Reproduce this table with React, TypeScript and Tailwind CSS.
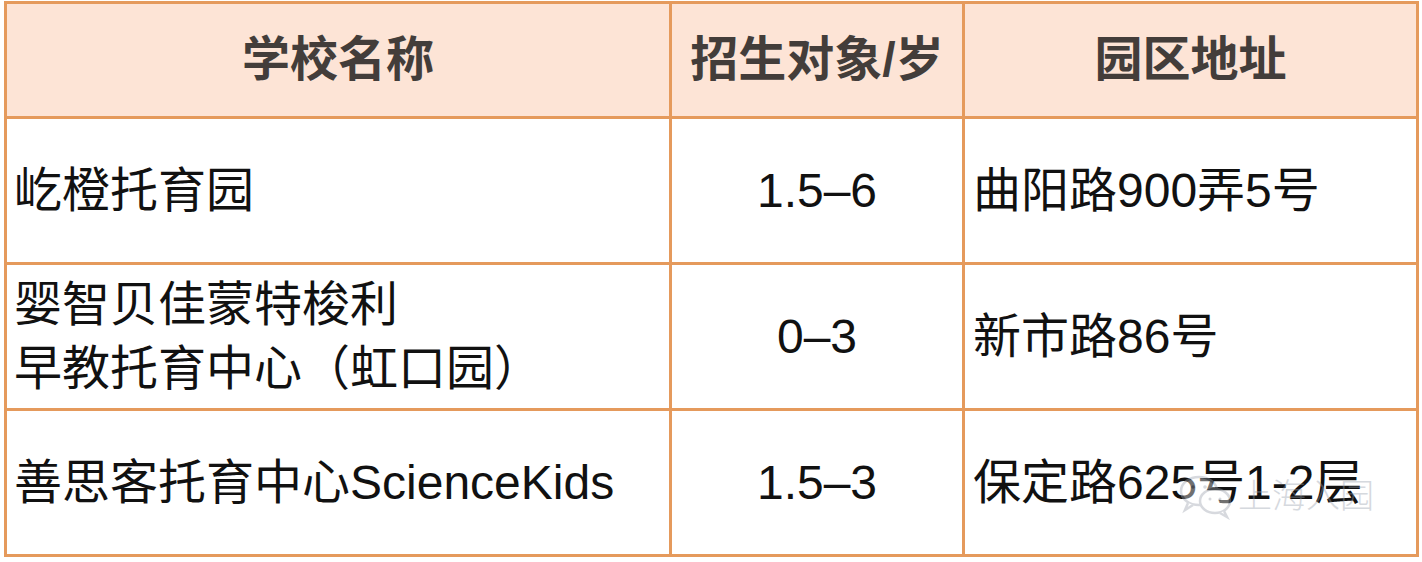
const rows = [
  { name: ["屹橙托育园"], age: "1.5–6", addr: "曲阳路900弄5号" },
  { name: ["婴智贝佳蒙特梭利", "早教托育中心（虹口园）"], age: "0–3", addr: "新市路86号" },
  { name: ["善思客托育中心ScienceKids"], age: "1.5–3", addr: "保定路625号1-2层" },
];

function WeChatMark() {
  return (
    <div className="absolute left-[1178px] top-[472px] flex items-center gap-1 opacity-40 pointer-events-none">
      <svg width="56" height="48" viewBox="0 0 56 48" fill="none" stroke="#9ca3af" strokeWidth="2.5">
        <ellipse cx="21" cy="19" rx="18" ry="14" fill="white" />
        <path d="M10 31 L7 38 L15 33" fill="white" />
        <ellipse cx="37" cy="29" rx="15" ry="12" fill="white" />
        <path d="M46 39 L49 45 L42 41" fill="white" />
        <circle cx="15" cy="15" r="1.8" fill="#9ca3af" stroke="none" />
        <circle cx="27" cy="15" r="1.8" fill="#9ca3af" stroke="none" />
        <circle cx="32" cy="27" r="1.5" fill="#9ca3af" stroke="none" />
        <circle cx="42" cy="27" r="1.5" fill="#9ca3af" stroke="none" />
      </svg>
      <span className="text-[34px] leading-none text-gray-400 font-light">上海入园</span>
    </div>
  );
}

export default function App() {
  return (
    <div
      className="relative w-[1422px] h-[562px] bg-white overflow-hidden"
      style={{ fontFamily: '"Liberation Sans", "Noto Sans CJK SC", sans-serif' }}
    >
      <table className="ml-[4px] mt-[1px] border-collapse table-fixed w-[1412px]">
        <colgroup>
          <col className="w-[665px]" />
          <col className="w-[293px]" />
          <col className="w-[454px]" />
        </colgroup>
        <thead>
          <tr className="h-[115px] bg-[#fde4d6]">
            {["学校名称", "招生对象/岁", "园区地址"].map((h) => (
              <th
                key={h}
                className="border-[3px] border-[#e59a5c] text-center text-[48px] font-bold text-[#433d3a] leading-none"
              >
                {h}
              </th>
            ))}
          </tr>
        </thead>
        <tbody>
          {rows.map((r) => (
            <tr key={r.addr} className="h-[146px]">
              <td className="border-[3px] border-[#e59a5c] pl-[7px] text-[48px] leading-[64px] text-[#111] align-middle">
                {r.name.map((n) => (
                  <div key={n} className="whitespace-nowrap">{n}</div>
                ))}
              </td>
              <td className="border-[3px] border-[#e59a5c] text-center text-[48px] text-[#111] align-middle">
                {r.age}
              </td>
              <td className="border-[3px] border-[#e59a5c] pl-[8px] text-[48px] text-[#111] align-middle whitespace-nowrap">
                {r.addr}
              </td>
            </tr>
          ))}
        </tbody>
      </table>
      <WeChatMark />
    </div>
  );
}
